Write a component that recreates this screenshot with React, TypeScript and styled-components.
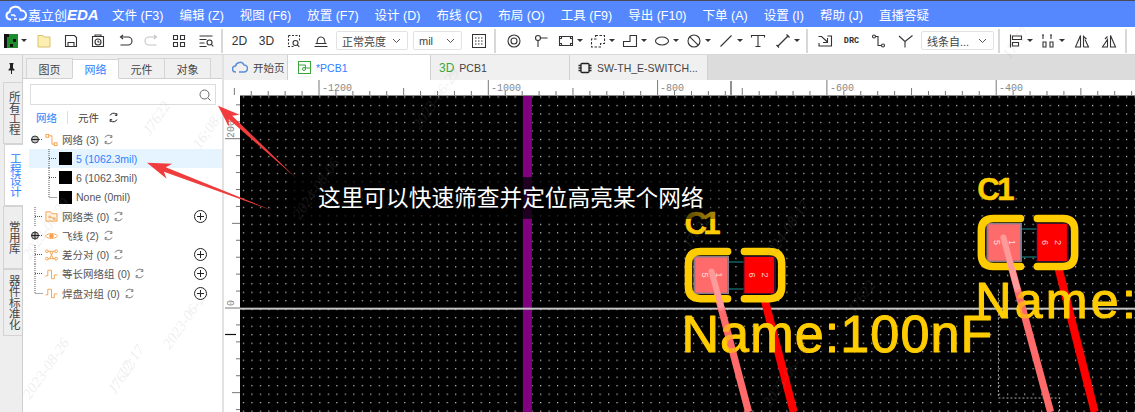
import React from 'react'
import styled, { createGlobalStyle } from 'styled-components'

const FONT = `"Liberation Sans", "Noto Sans CJK SC", Arial, sans-serif`

const GlobalStyle = createGlobalStyle`
  html, body {
    margin: 0;
    padding: 0;
    background: #fff;
    overflow: hidden;
  }
  * { box-sizing: border-box; }
`

const Page = styled.div`
  position: relative;
  width: 1135px;
  height: 412px;
  overflow: hidden;
  display: flex;
  flex-direction: column;
  font-family: ${FONT};
  color: #444;
`

const MenuBar = styled.div`
  height: 27px;
  flex: none;
  display: flex;
  align-items: center;
  background: #5588ff;
  border-top: 1px solid #4a4a55;
  color: #fff;
  font-size: 12.5px;
`

const Logo = styled.div`
  width: 112px;
  flex: none;
  padding-left: 5px;
  display: flex;
  align-items: center;
  gap: 1px;
  font-size: 13px;
  b {
    font-style: italic;
    font-size: 15px;
    font-weight: 700;
  }
`

const MenuList = styled.div`
  display: flex;
  gap: 16px;
  white-space: nowrap;
`

const ToolBar = styled.div`
  height: 28px;
  flex: none;
  display: flex;
  align-items: center;
  background: #fff;
  border-bottom: 1px solid #d8d8d8;
`

const ToolBtn = styled.div<{ $w?: number; $ml?: number }>`
  width: ${({ $w }) => $w ?? 27}px;
  margin-left: ${({ $ml }) => $ml ?? 0}px;
  flex: none;
  display: flex;
  align-items: center;
  justify-content: center;
  gap: 3px;
  height: 100%;
  font-size: 12px;
  color: #333;
`

const DrcLabel = styled.span`
  font-size: 8.5px;
  font-weight: 700;
  font-family: "Liberation Mono", monospace;
`

const Caret = styled.i`
  display: block;
  width: 0;
  height: 0;
  border-left: 3px solid transparent;
  border-right: 3px solid transparent;
  border-top: 3px solid #333;
`

const Sep = styled.div<{ $ml?: number; $mr?: number }>`
  width: 2px;
  height: 24px;
  flex: none;
  background: #d8d8d8;
  margin-left: ${({ $ml }) => $ml ?? 2}px;
  margin-right: ${({ $mr }) => $mr ?? 2}px;
`

const SelectBox = styled.div<{ $w: number; $ml?: number }>`
  width: ${({ $w }) => $w}px;
  margin-left: ${({ $ml }) => $ml ?? 0}px;
  height: 19px;
  flex: none;
  display: flex;
  align-items: center;
  justify-content: space-between;
  padding: 0 6px 0 5px;
  border: 1px solid #e2e2e2;
  border-radius: 2px;
  font-size: 11px;
  color: #444;
  white-space: nowrap;
`

const Main = styled.div`
  flex: 1;
  min-height: 0;
  display: flex;
`

const Rail = styled.div`
  width: 23px;
  flex: none;
  background: #eeeeee;
  border-right: 1px solid #cfcfcf;
  display: flex;
  flex-direction: column;
  align-items: flex-end;
`

const PinSlot = styled.div`
  width: 100%;
  height: 27px;
  flex: none;
  display: flex;
  align-items: center;
  justify-content: center;
`

const RailTab = styled.div<{ $h: number; $active?: boolean }>`
  width: 19px;
  height: ${({ $h }) => $h}px;
  flex: none;
  display: flex;
  align-items: center;
  justify-content: center;
  writing-mode: vertical-rl;
  text-orientation: upright;
  font-size: 11.5px;
  line-height: 1;
  letter-spacing: -0.5px;
  background: ${({ $active }) => ($active ? '#fff' : '#eeeeee')};
  color: ${({ $active }) => ($active ? '#2f80ff' : '#444')};
  border: 1px solid #d4d4d4;
  border-right: none;
  margin-right: ${({ $active }) => ($active ? '-1px' : '0')};
`

const Panel = styled.div`
  width: 199px;
  flex: none;
  display: flex;
  flex-direction: column;
  background: #fff;
`

const PanelTabs = styled.div`
  height: 24px;
  flex: none;
  display: flex;
  align-items: flex-end;
  padding-left: 4px;
  background: #eeeeee;
  border-bottom: 1px solid #d0d0d0;
`

const PanelTab = styled.div<{ $active?: boolean }>`
  width: 47px;
  height: 20px;
  display: flex;
  align-items: center;
  justify-content: center;
  font-size: 11px;
  background: ${({ $active }) => ($active ? '#fff' : '#f0f0f0')};
  color: ${({ $active }) => ($active ? '#2f80ff' : '#444')};
  border: 1px solid #d4d4d4;
  border-bottom: ${({ $active }) => ($active ? '1px solid #fff' : 'none')};
  margin-left: -1px;
  margin-bottom: ${({ $active }) => ($active ? '-1px' : '0')};
`

const SearchBox = styled.div`
  height: 21px;
  width: 186px;
  flex: none;
  margin: 5px 0 0 7px;
  border: 1px solid #dcdcdc;
  display: flex;
  align-items: center;
  justify-content: flex-end;
  padding-right: 3px;
  color: #555;
`

const SubTabs = styled.div`
  height: 25px;
  flex: none;
  display: flex;
  align-items: center;
  padding-left: 13px;
  font-size: 10.5px;
`

const SubTab = styled.span<{ $active?: boolean }>`
  color: ${({ $active }) => ($active ? '#2f80ff' : '#444')};
`

const SubDivider = styled.i`
  display: block;
  width: 1px;
  height: 13px;
  background: #ddd;
  margin: 0 10px;
`

const TreeRow = styled.div<{ $selected?: boolean; $child?: boolean }>`
  height: 19.2px;
  flex: none;
  display: flex;
  align-items: center;
  margin-left: 6px;
  padding-left: ${({ $child }) => ($child ? 14 : 0)}px;
  padding-right: 15px;
  font-size: 10.5px;
  white-space: nowrap;
  background: ${({ $selected }) => ($selected ? '#e6f4ff' : 'transparent')};
  color: ${({ $selected }) => ($selected ? '#2f80ff' : '#555')};
`

const NetSwatch = styled.i`
  display: block;
  width: 13px;
  height: 13px;
  margin-right: 4px;
  background: #000;
  flex: none;
`

const NodeIcon = styled.span`
  display: flex;
  width: 13px;
  margin-right: 4px;
  flex: none;
`

const RowRefresh = styled.span<{ $ml?: number }>`
  display: flex;
  margin-left: ${({ $ml }) => $ml ?? 4}px;
`

const AddSlot = styled.span`
  display: flex;
  margin-left: auto;
`

const Splitter = styled.div`
  width: 2px;
  flex: none;
  background: #e2e2e2;
`

const Work = styled.div`
  flex: 1;
  min-width: 0;
  display: flex;
  flex-direction: column;
`

const DocTabs = styled.div`
  height: 25px;
  flex: none;
  display: flex;
  background: #dcdcdc;
`

const DocTab = styled.div<{ $w: number; $active?: boolean; $pl?: number }>`
  width: ${({ $w }) => $w}px;
  flex: none;
  display: flex;
  align-items: center;
  gap: 5px;
  padding-left: ${({ $pl }) => $pl ?? 8}px;
  font-size: 10.5px;
  white-space: nowrap;
  background: ${({ $active }) => ($active ? '#fff' : '#f0f0f0')};
  color: ${({ $active }) => ($active ? '#2f80ff' : '#444')};
  border-right: 1px solid #d0d0d0;
`

const Green3D = styled.span`
  color: #3aa63a;
  font-size: 12px;
`

const RulerStrip = styled.svg`
  display: block;
  flex: none;
`

const CanvasRow = styled.div`
  flex: 1;
  min-height: 0;
  display: flex;
`

const Canvas = styled.div`
  position: relative;
  flex: 1;
  min-width: 0;
  background: #000;
  overflow: hidden;
`

const BoardSvg = styled.svg`
  display: block;
  width: 100%;
  height: 100%;
`

// the annotation sits on a see-through black band, the board shows faintly behind it
const Callout = styled.div`
  position: absolute;
  left: 50px;
  top: 81px;
  height: 42px;
  width: 440px;
  padding-left: 28px;
  display: flex;
  align-items: center;
  background: linear-gradient(90deg, rgba(0, 0, 0, 0.75) 0, rgba(0, 0, 0, 0.75) 88%, rgba(0, 0, 0, 0.15) 100%);
`

const CalloutText = styled.span`
  color: #fff;
  font-size: 22.7px;
  line-height: 26px;
  white-space: nowrap;
`

const Overlay = styled.svg`
  position: absolute;
  left: 0;
  top: 0;
  pointer-events: none;
`

const MENUS = ['文件 (F3)', '编辑 (Z)', '视图 (F6)', '放置 (F7)', '设计 (D)', '布线 (C)', '布局 (O)', '工具 (F9)', '导出 (F10)', '下单 (A)', '设置 (I)', '帮助 (J)', '直播答疑']

// toolbar drawings, 16x16
const GLYPHS: Record<string, React.ReactNode> = {
  save: <path d="M2.5 2.5h9l2 2v9h-11zM5 13.5v-4h6v4" />,
  saveAs: (
    <>
      <path d="M2.5 3.5h11v10h-11zM5 3.5v-1.500h6v1.500" />
      <circle cx="8" cy="9" r="3" />
      <path d="M8 7.500V9h1.500" />
    </>
  ),
  undo: <path d="M4.500 4H11a4 4 0 0 1 0 8H3.500M6 2L3.500 4 6 6" />,
  grid4: <path d="M2.500 2.500h4v4h-4zM9.500 2.500h4v4h-4zM2.500 9.500h4v4h-4zM9.500 9.500h4v4h-4z" />,
  listSearch: (
    <>
      <path d="M1.500 3h13M1.500 6.500h7M1.500 10h5M1.500 13.500h7" />
      <circle cx="11.500" cy="9.500" r="2.500" />
      <path d="M13.300 11.300l2 2" />
    </>
  ),
  zoomBox: (
    <>
      <path strokeDasharray="2 1.500" d="M2.500 2.500h11v5M2.500 2.500v11h5" />
      <circle cx="9.500" cy="10" r="2.500" />
      <path d="M11.300 11.800l2 2" />
    </>
  ),
  arc: <path d="M1.500 13.500h13M2.500 10.500h11M4 10.500C4 6 5.500 4 8 4s4 2 4 6.500" />,
  target: (
    <>
      <circle cx="8" cy="8" r="6" />
      <circle cx="8" cy="8" r="3" />
    </>
  ),
  pin: (
    <>
      <circle cx="5" cy="5" r="2.500" />
      <path d="M7.500 5h7M5 7.500V14" />
    </>
  ),
  rectMark: <path d="M1.500 3.500h13v9h-13zM1.500 5.500h2v-2M14.500 5.500h-2v-2M1.500 10.500h2v2M14.500 10.500h-2v2" />,
  rectDash: <path strokeDasharray="2.500 1.500" d="M5.500 2.500h9v8h-4v3.500h-9V6h4.500z" />,
  poly: <path d="M1.500 13.500v-5h6.500v-6h6.500v11z" />,
  oval: <ellipse cx="8" cy="8" rx="6.500" ry="4" />,
  noEntry: (
    <>
      <circle cx="8" cy="8" r="6" />
      <path d="M3.800 3.800l8.400 8.400" />
    </>
  ),
  line: <path d="M2.500 13.500L13.500 2.500" />,
  text: <path d="M1.500 4.500v-2h13v2M8 2.500v11M5.500 13.500h5" />,
  dim: <path strokeWidth="1.300" d="M2.500 13.500L13.500 2.500M1.500 12l2.500 2.500M11.500 1.500l3 3" />,
  bend: <path d="M1.500 3.500h3l6 5.500M10.500 5v4.500H6M10.500 3H14.500v10H2v-3" />,
  route: (
    <>
      <circle cx="3" cy="3.500" r="1.500" />
      <path d="M4.500 3.500H7v9h3" />
      <circle cx="12" cy="12.500" r="1.500" />
    </>
  ),
  fork: <path d="M1 3l6 5.500v6M7 8.500L14.500 2.500" />,
  alignLeft: <path d="M2.500 1.500v13M4.500 3h9v3.500h-9zM4.500 9.500h6V13h-6z" />,
  distribute: <path d="M3 1.500v4.500M3 9h3v5H3zM11 1.500v4.500M10 9h3v5h-3zM2 2h2M10 2h2" />,
  flipA: <path d="M1.500 14L6.500 2.500V14zM9.500 14V2.500M9.500 14h5L11 6.500M9.500 3.500l3 2.500" />,
  flipB: <path d="M1.500 14h5V6.500zM9.500 14V2.500L14.500 14zM6.500 3.500L4 6" />,
}

function Glyph({ name, size = 16, color = '#333', flip }: { name: string; size?: number; color?: string; flip?: boolean }) {
  return (
    <svg width={size} height={size} viewBox="0 0 16 16" fill="none" stroke={color} strokeWidth="1.100" transform={flip ? 'scale(-1 1)' : undefined}>
      {GLYPHS[name]}
    </svg>
  )
}

const Chevron = () => (
  <svg width="9" height="6" viewBox="0 0 9 6" fill="none" stroke="#555" strokeWidth="1">
    <path d="M1 1l3.500 3.500L8 1" />
  </svg>
)

const CloudLogo = () => (
  <svg width="22" height="18" viewBox="0 0 22 18" fill="none" stroke="#fff" strokeWidth="2">
    <path d="M6 14.500H5A3.800 3.800 0 0 1 4.500 7 6 6 0 0 1 16 5.500a4.500 4.500 0 0 1 1 9h-3" />
    <path d="M6 10h3l1.500 1.500M9 14h3" strokeWidth="1.500" />
  </svg>
)

const Refresh = ({ color = '#777' }: { color?: string }) => (
  <svg width="11" height="11" viewBox="0 0 11 11" fill="none" stroke={color} strokeWidth="1">
    <path d="M2 3.500A4 4 0 0 1 8 2M9 7.500A4 4 0 0 1 3 9" />
    <path d="M6.800 3.200L9 3.400 8.600 1M4.200 7.800L2 7.600 2.400 10" />
  </svg>
)

const AddBtn = () => (
  <AddSlot>
    <svg width="13" height="13" viewBox="0 0 13 13" fill="none" stroke="#222" strokeWidth="1">
      <circle cx="6.500" cy="6.500" r="6" />
      <path d="M3 6.500h7M6.500 3v7" />
    </svg>
  </AddSlot>
)

type ConnKind = 'minus' | 'plus' | 'tee' | 'end'

const ConnSvg = styled.svg`
  flex: none;
`

const Conn = ({ kind }: { kind: ConnKind }) => (
  <ConnSvg width="16" height="19" viewBox="0 0 16 19" fill="none" stroke="#555" strokeWidth="1">
    {kind === 'tee' && <path strokeDasharray="1 1" d="M6 0v19M6 9.500h8" />}
    {kind === 'end' && <path strokeDasharray="1 1" d="M6 0v9.500h8" />}
    {(kind === 'minus' || kind === 'plus') && (
      <>
        <path strokeDasharray="1 1" d="M10 9.500h4" />
        <circle cx="6" cy="9.500" r="3.500" fill="#bbb" stroke="#333" />
        <path stroke="#222" d={kind === 'plus' ? 'M2 9.500h8M6 5.500v8' : 'M2 9.500h8'} />
      </>
    )}
  </ConnSvg>
)

const ORANGE = '#f5a04a'

const OrangeIcon = ({ kind }: { kind: 'net' | 'folder' | 'eye' | 'diff' | 'wave' }) => (
  <svg width="14" height="14" viewBox="0 0 14 14" fill="none" stroke={ORANGE} strokeWidth="1">
    {kind === 'net' && (
      <>
        <rect x="1" y="1" width="3" height="3" />
        <rect x="10" y="10" width="3" height="3" />
        <path d="M4 2.500h3.500v9H10" />
      </>
    )}
    {kind === 'folder' && (
      <>
        <path d="M1 2.500h5l1.500 2h5.500v8H1z" fill="#fff3e2" />
        <circle cx="5" cy="8" r="1" />
        <circle cx="10" cy="10" r="1" />
        <path d="M6 8l3 1.500" />
      </>
    )}
    {kind === 'eye' && (
      <>
        <path d="M0.500 7C3 3.500 11 3.500 13.500 7 11 10.500 3 10.500 0.500 7z" />
        <circle cx="7" cy="7" r="2" fill={ORANGE} />
      </>
    )}
    {kind === 'diff' && (
      <>
        <path d="M3 3h8M3 11h8M5 3l2 4-2 4M9 3L7 7l2 4" />
        <circle cx="2" cy="3" r="1.500" />
        <circle cx="12" cy="3" r="1.500" />
        <circle cx="2" cy="11" r="1.500" />
        <circle cx="12" cy="11" r="1.500" />
      </>
    )}
    {kind === 'wave' && <path d="M0.500 9H3V3h4v9h3V8h3.500" strokeLinejoin="round" />}
  </svg>
)

const Watermarks = [
  { x: 150, y: 136, t: 'J7622', a: -55 },
  { x: 200, y: 150, t: '16:08', a: -55 },
  { x: 30, y: 260, t: '2023-06-29', a: -55 },
  { x: 125, y: 378, t: '17:17', a: -55 },
  { x: 170, y: 350, t: '2023-06-29', a: -55 },
  { x: 115, y: 395, t: 'J7622', a: -55 },
  { x: 30, y: 400, t: '2023-08-26', a: -55 },
  { x: 300, y: 220, t: '2024-08-06', a: -55 },
  { x: 690, y: 250, t: 'J7622', a: -55 },
  { x: 770, y: 262, t: '2024-08-17', a: -55 },
  { x: 855, y: 315, t: 'J7622', a: -55 },
  { x: 770, y: 408, t: '2023-06-29', a: -55 },
  { x: 420, y: 130, t: '2023-06-29', a: -55 },
  { x: 1010, y: 60, t: '17:17', a: -55 },
]

const YELLOW = '#ffcc00'
const STEP = 8.465

function PadDigit({ x, y, children }: { x: number; y: number; children: string }) {
  return (
    <text transform={`translate(${x} ${y}) rotate(90)`} textAnchor="middle" dominantBaseline="central" fontSize="9" fill="rgba(255,255,255,.8)" fontFamily="Liberation Sans">
      {children}
    </text>
  )
}

function Footprint({ ox, oy, w, h }: { ox: number; oy: number; w: number; h: number }) {
  // ox/oy = top left of the silkscreen centre line, w/h its size
  const gapL = ox + w * 0.42
  const gapR = ox + w * 0.6
  const padL = ox + 6
  const padW = w * 0.36
  const padR = gapR
  const padY = oy + 5.500
  const padH = h - 11
  const midY = padY + padH / 2
  return (
    <g>
      <path d={`M${padL + padW} ${padY + 5}H${padR}M${padL + padW} ${padY + padH - 4}H${padR}`} stroke="#1c8f8f" strokeWidth="1" />
      <rect x={padL - 1} y={padY - 1} width={padW + 2} height={padH + 2} fill="#8a7a8a" />
      <rect x={padL + 1} y={padY + 0.500} width={padW - 2} height={padH - 1} fill="#ff6a6a" />
      <rect x={padR - 1} y={padY - 1} width={padW - 1} height={padH + 2} fill="#301030" />
      <rect x={padR} y={padY} width={padW - 4} height={padH} fill="#ff0000" />
      <PadDigit x={padL + padW * 0.3} y={midY}>5</PadDigit>
      <PadDigit x={padL + padW * 0.72} y={midY}>1</PadDigit>
      <PadDigit x={padR + padW * 0.22} y={midY}>6</PadDigit>
      <PadDigit x={padR + padW * 0.62} y={midY}>2</PadDigit>
      <path
        d={`M${gapL} ${oy}H${ox + 12}Q${ox} ${oy} ${ox} ${oy + 12}V${oy + h - 12}Q${ox} ${oy + h} ${ox + 12} ${oy + h}H${gapL}M${gapR} ${oy}H${ox + w - 12}Q${ox + w} ${oy} ${ox + w} ${oy + 12}V${oy + h - 12}Q${ox + w} ${oy + h} ${ox + w - 12} ${oy + h}H${gapR}`}
        fill="none"
        stroke={YELLOW}
        strokeWidth="7.500"
        strokeLinecap="round"
      />
    </g>
  )
}

function Board() {
  return (
    <BoardSvg viewBox="240 97 895 315" preserveAspectRatio="xMinYMin slice">
      <defs>
        <pattern id="dots" x="319" y="309" width={STEP} height={STEP} patternUnits="userSpaceOnUse">
          <rect width="1.200" height="1.200" fill="#cccccc" />
        </pattern>
      </defs>
      <rect x="240" y="97" width="895" height="315" fill="#000" />
      <rect x="240" y="97" width="895" height="315" fill="url(#dots)" />
      <rect x="522" y="97" width="9" height="315" fill="#800080" />
      <rect x="240" y="308" width="895" height="2" fill="#c4c4c4" />
      <path d="M996 290V398H1057V412" fill="none" stroke="#aaa" strokeDasharray="2 2" />

      <path d="M763 300L792 412" stroke="#ff0000" strokeWidth="8" />
      <path d="M1055 265L1092 412" stroke="#ff0000" strokeWidth="8" />
      <path d="M710 272L747 412" stroke="#ff6a6a" strokeWidth="7" />
      <path d="M1001 238L1048 412" stroke="#ff6a6a" strokeWidth="7" />

      <Footprint ox={687} oy={252} w={93} h={47} />
      <Footprint ox={979} oy={219} w={93} h={48} />
      <path d="M710 272L720 308" stroke="#ff9a9a" strokeWidth="6" strokeLinecap="round" />
      <path d="M1001 238L1015 290" stroke="#ff9a9a" strokeWidth="6" strokeLinecap="round" />

      <g fill={YELLOW} stroke={YELLOW} strokeLinejoin="round" fontFamily="Liberation Sans">
        <text x="683" y="235" fontSize="31" fontWeight="700" strokeWidth="0.500" textLength="36">C1</text>
        <text x="975" y="201" fontSize="31" fontWeight="700" strokeWidth="0.500" textLength="37">C1</text>
        <text x="680" y="352" fontSize="52" strokeWidth="1" textLength="310">Name:100nF</text>
        <text x="973" y="318" fontSize="50" strokeWidth="1" textLength="160">Name:</text>
      </g>
      <path d="M720 308L747 412M1015 290L1048 412" stroke="#ff6a6a" strokeWidth="7" opacity=".35" />
    </BoardSvg>
  )
}

const TOP_LABELS = [
  { x: 319, t: '-1200' },
  { x: 488, t: '-1000' },
  { x: 657, t: '-800' },
  { x: 827, t: '-600' },
  { x: 996, t: '-400' },
]

function TopRuler() {
  const ticks = []
  for (let i = -5; i < 50; i++) {
    const x = 319 + i * 16.93
    const len = i % 10 === 0 ? 15 : i % 5 === 0 ? 7 : 4
    ticks.push(<path key={i} d={`M${x} 96V${96 - len}`} />)
  }
  return (
    <RulerStrip width="911" height="16" viewBox="224 81 911 16">
      <rect x="224" y="81" width="911" height="16" fill="#fff" />
      <g stroke="#777" strokeWidth="1">{ticks}</g>
      <path d="M731 96V82" stroke="#222" />
      <path d="M240 96.500H1135" stroke="#888" />
      <g fontFamily="Liberation Mono" fontSize="10" fill="#888">
        {TOP_LABELS.map(l => (
          <text key={l.t} x={l.x + 3} y="92">{l.t}</text>
        ))}
      </g>
    </RulerStrip>
  )
}

function LeftRuler() {
  const ticks = []
  for (let i = -13; i < 7; i++) {
    const y = 309 + i * 16.93
    const len = i % 10 === 0 ? 15 : i % 5 === 0 ? 8 : 4
    ticks.push(<path key={i} d={`M240 ${y}H${240 - len}`} />)
  }
  return (
    <RulerStrip width="16" height="315" viewBox="224 97 16 315">
      <rect x="224" y="97" width="16" height="315" fill="#fff" />
      <g stroke="#777" strokeWidth="1">{ticks}</g>
      <path d="M225 335.500H236" stroke="#111" strokeWidth="1.200" />
      <g fontFamily="Liberation Mono" fontSize="10" fill="#888">
        <text transform="translate(234 139) rotate(-90)">200</text>
        <text transform="translate(234 307) rotate(-90)">0</text>
      </g>
    </RulerStrip>
  )
}

export default function App() {
  return (
    <Page>
      <GlobalStyle />
      <MenuBar>
        <Logo>
          <CloudLogo />
          <span>嘉立创<b>EDA</b></span>
        </Logo>
        <MenuList>
          {MENUS.map(m => (
            <span key={m}>{m}</span>
          ))}
        </MenuList>
      </MenuBar>

      <ToolBar>
        <ToolBtn $w={30}>
          <svg width="14" height="14" viewBox="0 0 14 14">
            <rect width="14" height="14" fill="#1c8c2c" />
            <path d="M0 0h5v3H3v11H0zM9 5h3v3H9zM6 10h3v3H6z" fill="#111" />
          </svg>
          <Caret />
        </ToolBtn>
        <ToolBtn>
          <svg width="14" height="14" viewBox="0 0 14 14" fill="#fbeeb0" stroke="#d9c36a">
            <path d="M1 1.500h5l1 1.500h6v10H1z" />
          </svg>
        </ToolBtn>
        <ToolBtn><Glyph name="save" /></ToolBtn>
        <ToolBtn><Glyph name="saveAs" /></ToolBtn>
        <ToolBtn><Glyph name="undo" /></ToolBtn>
        <ToolBtn><Glyph name="undo" color="#c4c4c4" flip /></ToolBtn>
        <ToolBtn><Glyph name="grid4" /></ToolBtn>
        <ToolBtn><Glyph name="listSearch" /></ToolBtn>
        <Sep />
        <ToolBtn $ml={1}>2D</ToolBtn>
        <ToolBtn>3D</ToolBtn>
        <ToolBtn><Glyph name="zoomBox" /></ToolBtn>
        <ToolBtn><Glyph name="arc" /></ToolBtn>
        <SelectBox $w={72} $ml={2}>正常亮度<Chevron /></SelectBox>
        <SelectBox $w={49} $ml={5}>mil<Chevron /></SelectBox>
        <ToolBtn $ml={3}>
          <svg width="14" height="14" viewBox="0 0 14 14" fill="none" stroke="#333">
            <rect x="0.500" y="0.500" width="13" height="13" />
            <path strokeDasharray="1.500 1.500" d="M3 4h9M3 7h9M3 10h9" />
          </svg>
        </ToolBtn>
        <Sep />
        <ToolBtn $ml={2}><Glyph name="target" /></ToolBtn>
        <ToolBtn><Glyph name="pin" /></ToolBtn>
        <ToolBtn $w={32}><Glyph name="rectMark" /><Caret /></ToolBtn>
        <ToolBtn $w={32}><Glyph name="rectDash" /><Caret /></ToolBtn>
        <ToolBtn $w={32}><Glyph name="poly" /><Caret /></ToolBtn>
        <ToolBtn $w={32}><Glyph name="oval" /><Caret /></ToolBtn>
        <ToolBtn $w={32}><Glyph name="noEntry" /><Caret /></ToolBtn>
        <ToolBtn $w={32}><Glyph name="line" /><Caret /></ToolBtn>
        <ToolBtn $w={24}><Glyph name="text" /></ToolBtn>
        <ToolBtn $w={34}><Glyph name="dim" /><Caret /></ToolBtn>
        <Sep />
        <ToolBtn $ml={1}><Glyph name="bend" /></ToolBtn>
        <ToolBtn><DrcLabel>DRC</DrcLabel></ToolBtn>
        <ToolBtn><Glyph name="route" /></ToolBtn>
        <ToolBtn><Glyph name="fork" /></ToolBtn>
        <SelectBox $w={73} $ml={2}>线条自...<Chevron /></SelectBox>
        <Sep $ml={4} $mr={4} />
        <ToolBtn $w={32}><Glyph name="alignLeft" /><Caret /></ToolBtn>
        <ToolBtn $w={32}><Glyph name="distribute" /><Caret /></ToolBtn>
        <ToolBtn><Glyph name="flipA" /></ToolBtn>
        <ToolBtn><Glyph name="flipB" /></ToolBtn>
        <Sep $ml={3} />
      </ToolBar>

      <Main>
        <Rail>
          <PinSlot>
            <svg width="9" height="11" viewBox="0 0 9 11" fill="#222">
              <path d="M2.500 0h4v1l-.5.500V5l1.500 1.500V7.500H5V11H4V7.500H1.500V6.500L3 5V1.500L2.500 1z" />
            </svg>
          </PinSlot>
          <RailTab $h={62}>所有工程</RailTab>
          <RailTab $h={62} $active>工程设计</RailTab>
          <RailTab $h={63}>常用库</RailTab>
          <RailTab $h={67}>器件标准化</RailTab>
        </Rail>

        <Panel>
          <PanelTabs>
            <PanelTab>图页</PanelTab>
            <PanelTab $active>网络</PanelTab>
            <PanelTab>元件</PanelTab>
            <PanelTab>对象</PanelTab>
          </PanelTabs>
          <SearchBox>
            <svg width="14" height="14" viewBox="0 0 14 14" fill="none" stroke="#666" strokeWidth="1">
              <circle cx="6.500" cy="6.500" r="4.500" />
              <path d="M10 10l2.500 2.500" />
            </svg>
          </SearchBox>
          <SubTabs>
            <SubTab $active>网络</SubTab>
            <SubDivider />
            <SubTab>元件</SubTab>
            <RowRefresh $ml={9}><Refresh color="#222" /></RowRefresh>
          </SubTabs>
          <TreeRow>
            <Conn kind="minus" />
            <NodeIcon><OrangeIcon kind="net" /></NodeIcon>
            网络 (3)<RowRefresh><Refresh /></RowRefresh>
          </TreeRow>
          <TreeRow $child $selected>
            <Conn kind="tee" />
            <NetSwatch />
            5 (1062.3mil)
          </TreeRow>
          <TreeRow $child>
            <Conn kind="tee" />
            <NetSwatch />
            6 (1062.3mil)
          </TreeRow>
          <TreeRow $child>
            <Conn kind="end" />
            <NetSwatch />
            None (0mil)
          </TreeRow>
          <TreeRow>
            <Conn kind="tee" />
            <NodeIcon><OrangeIcon kind="folder" /></NodeIcon>
            网络类 (0)<RowRefresh><Refresh /></RowRefresh>
            <AddBtn />
          </TreeRow>
          <TreeRow>
            <Conn kind="plus" />
            <NodeIcon><OrangeIcon kind="eye" /></NodeIcon>
            飞线 (2)<RowRefresh><Refresh /></RowRefresh>
          </TreeRow>
          <TreeRow>
            <Conn kind="tee" />
            <NodeIcon><OrangeIcon kind="diff" /></NodeIcon>
            差分对 (0)<RowRefresh><Refresh /></RowRefresh>
            <AddBtn />
          </TreeRow>
          <TreeRow>
            <Conn kind="tee" />
            <NodeIcon><OrangeIcon kind="wave" /></NodeIcon>
            等长网络组 (0)<RowRefresh><Refresh /></RowRefresh>
            <AddBtn />
          </TreeRow>
          <TreeRow>
            <Conn kind="end" />
            <NodeIcon><OrangeIcon kind="wave" /></NodeIcon>
            焊盘对组 (0)<RowRefresh><Refresh /></RowRefresh>
            <AddBtn />
          </TreeRow>
        </Panel>

        <Splitter />

        <Work>
          <DocTabs>
            <DocTab $w={64}>
              <svg width="16" height="13" viewBox="0 0 16 13" fill="none" stroke="#5a8fd8" strokeWidth="1.500">
                <path d="M4 11H3.500a3 3 0 0 1 0-6A4.500 4.500 0 0 1 12 4a3.500 3.500 0 0 1 0 7H7" />
              </svg>
              开始页
            </DocTab>
            <DocTab $w={143} $active $pl={10}>
              <svg width="13" height="13" viewBox="0 0 13 13" fill="none" stroke="#3aa63a">
                <rect x="0.500" y="0.500" width="12" height="12" />
                <path d="M0.500 4h7v3h5" />
                <circle cx="6" cy="8" r="1.500" />
              </svg>
              *PCB1
            </DocTab>
            <DocTab $w={139}>
              <Green3D>3D</Green3D>PCB1
            </DocTab>
            <DocTab $w={138}>
              <svg width="14" height="12" viewBox="0 0 14 12" fill="none" stroke="#222" strokeWidth="1.300">
                <rect x="3" y="1.500" width="8" height="9" rx="1" />
                <path d="M0.500 3.500H3M0.500 6H3M0.500 8.500H3M11 3.500h2.500M11 6h2.500M11 8.500h2.500" />
              </svg>
              SW-TH_E-SWITCH...
            </DocTab>
          </DocTabs>
          <TopRuler />
          <CanvasRow>
            <LeftRuler />
            <Canvas>
              <Board />
              <Callout>
                <CalloutText>这里可以快速筛查并定位高亮某个网络</CalloutText>
              </Callout>
            </Canvas>
          </CanvasRow>
        </Work>
      </Main>

      <Overlay width="1135" height="412" viewBox="0 0 1135 412">
        <g fill="#f03c3c">
          <polygon points="218,105.700 228.800,126.500 228.800,119.300 296,178 232.200,115.700 239.600,114.700" />
          <polygon points="147,162.700 166.600,178.700 163.900,171.800 273,210.700 165.700,167.200 172.200,163.700" />
        </g>
        <g fill="#999" opacity=".16" fontFamily="Liberation Serif" fontStyle="italic" fontSize="15">
          {Watermarks.map(w => (
            <text key={`${w.x}-${w.y}`} transform={`translate(${w.x} ${w.y}) rotate(${w.a})`}>{w.t}</text>
          ))}
        </g>
      </Overlay>
    </Page>
  )
}
